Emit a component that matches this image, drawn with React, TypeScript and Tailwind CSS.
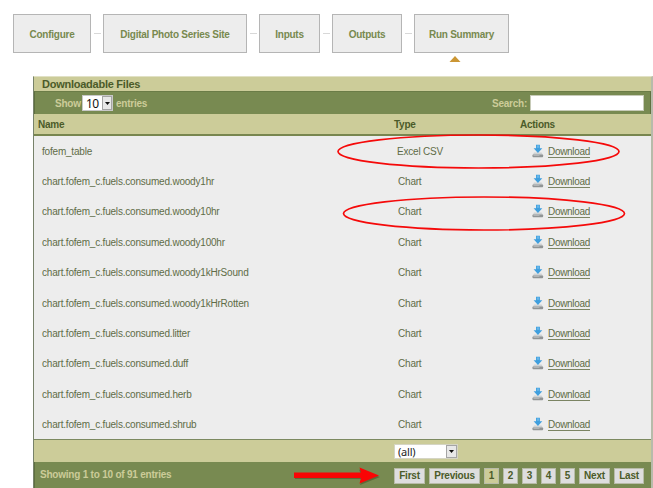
import React from "react";

const steps = [
  { label: "Configure", box: "w-[78px]", gap: "w-[12px]" },
  { label: "Digital Photo Series Site", box: "w-[144px]", gap: "w-[12px]" },
  { label: "Inputs", box: "w-[61px]", gap: "w-[12px]" },
  { label: "Outputs", box: "w-[70px]", gap: "w-[12px]" },
  { label: "Run Summary", box: "w-[95px]", gap: "" },
];

const files = [
  ["fofem_table", "Excel CSV"],
  ["chart.fofem_c.fuels.consumed.woody1hr", "Chart"],
  ["chart.fofem_c.fuels.consumed.woody10hr", "Chart"],
  ["chart.fofem_c.fuels.consumed.woody100hr", "Chart"],
  ["chart.fofem_c.fuels.consumed.woody1kHrSound", "Chart"],
  ["chart.fofem_c.fuels.consumed.woody1kHrRotten", "Chart"],
  ["chart.fofem_c.fuels.consumed.litter", "Chart"],
  ["chart.fofem_c.fuels.consumed.duff", "Chart"],
  ["chart.fofem_c.fuels.consumed.herb", "Chart"],
  ["chart.fofem_c.fuels.consumed.shrub", "Chart"],
];

const pages = [
  { label: "First", box: "w-[31px] mr-[4px]" },
  { label: "Previous", box: "w-[51px] mr-[4px]" },
  { label: "1", box: "w-[15px] mr-[4px]" },
  { label: "2", box: "w-[15px] mr-[4px]" },
  { label: "3", box: "w-[15px] mr-[4px]" },
  { label: "4", box: "w-[15px] mr-[4px]" },
  { label: "5", box: "w-[15px] mr-[4px]" },
  { label: "Next", box: "w-[31px] mr-[4px]" },
  { label: "Last", box: "w-[30px]" },
];

function DownloadIcon() {
  return (
    <svg width="12" height="14" viewBox="0 0 12 14" className="mr-[4px] -mt-px shrink-0">
      <path d="M2 8.500h7.600L11 11H0.600z" fill="#d0d3d4" />
      <rect x="0.500" y="10.500" width="10.600" height="2.800" rx="0.800" fill="#909495" />
      <path d="M1.500 11.300h6" stroke="#c5c8c9" strokeWidth="0.800" />
      <path d="M4 0.700h3.900v3.500h2.400L5.950 9 1.600 4.200H4z" fill="#3f9fde" />
      <path d="M4.800 1.300h2.200v2.500H4.800z" fill="#69b8ea" />
    </svg>
  );
}

function SelectArrow({ className }: { className: string }) {
  return (
    <span className={"flex items-center justify-center border border-[#a5a5a5] bg-[#e8e8e8] " + className}>
      <svg width="5" height="3" viewBox="0 0 5 3">
        <path d="M0 0h5L2.5 3z" fill="#111" />
      </svg>
    </span>
  );
}

export default function App() {
  return (
    <div className="relative h-[488px] w-[653px] overflow-hidden bg-white font-['Liberation_Sans',Arial,sans-serif] text-[11px] leading-[13px] whitespace-nowrap">
      <nav className="flex h-[76px] items-start pt-[14px] pl-[13px]">
        {steps.map((s) => (
          <React.Fragment key={s.label}>
            <div className={"relative flex h-[39px] items-center justify-center border border-[#b5b5b5] bg-[#ededed] pt-px text-[10px] font-bold tracking-[-0.250px] text-[#78894f] " + s.box}>
              {s.label}
              {s.label === "Run Summary" && (
                <svg width="12" height="6" viewBox="0 0 12 6" className="absolute top-[41px] left-[34px]">
                  <path d="M0.5 6 6 0l5.500 6z" fill="#cb9634" />
                </svg>
              )}
            </div>
            {s.gap && (
              <div className={"flex h-[39px] items-center justify-center " + s.gap}>
                <span className="h-px w-[7px] bg-[#d8d8d8]" />
              </div>
            )}
          </React.Fragment>
        ))}
      </nav>

      <section className="ml-[33px] flex h-[412px] w-[620px] flex-col border-t border-r-2 border-l border-t-[#e1e1c5] border-r-[#b7bbaa] border-l-[#77826a] bg-[#ededed]">
        <h2 className="h-[14px] bg-[#cccc99] pl-[8px] text-[11px] leading-[14px] font-bold tracking-[-0.250px] text-[#4b5b29]">
          Downloadable Files
        </h2>
        <div className="flex h-[23px] items-center border-t border-r border-l border-t-[#6b7c47] border-r-[#5f7040] border-l-[#5f7040] bg-[#788a51] pl-[20px] text-[10px] font-bold tracking-[-0.250px] text-[#cccc99]">
          <span className="w-[24px]">Show</span>
          <span className="ml-[3px] flex h-[16px] w-[31px] items-center border border-[#c8c8c8] bg-white">
            <span className="w-[19px] pl-[3px] font-['Noto_Sans',sans-serif] text-[12px] tracking-[-0.500px] font-normal text-[#111]">10</span>
            <SelectArrow className="h-[14px] w-[10px]" />
          </span>
          <span className="ml-[3px]">entries</span>
          <span className="ml-auto">Search:</span>
          <input className="mr-[6px] ml-[3px] h-[16px] w-[114px] border border-[#c7cbb8] bg-white" />
        </div>
        <div className="flex h-[22px] items-center border-b-2 border-[#78864f] bg-[#cccc99] pl-[4px] text-[10px] font-bold tracking-[-0.250px] text-[#4b5b29]">
          <span className="w-[356px]">Name</span>
          <span className="w-[126px]">Type</span>
          <span>Actions</span>
        </div>
        <div className="h-[303px]">
          {files.map(([name, type], i) => (
            <div key={name} className="flex h-[30.400px] items-center pl-[8px] text-[10px] tracking-[-0.200px] text-[#5f6c47]">
              <span className={i === 0 ? "w-[355px]" : "w-[356px]"}>{name}</span>
              <span className={i === 0 ? "w-[135px]" : "w-[134px]"}>{type}</span>
              <DownloadIcon />
              <a className="mt-px border-b border-[#7b8463] leading-[11px] tracking-[-0.300px]">Download</a>
            </div>
          ))}
        </div>
        <div className="flex h-[23px] items-center border-t border-[#7c8960] bg-[#cccc99]">
          <span className="ml-[360px] flex h-[15px] w-[64px] items-center justify-between border border-[#d5d5c4] bg-white">
            <span className="pl-[3px] font-['Noto_Sans',sans-serif] text-[11px] tracking-[-0.200px] text-[#222]">(all)</span>
            <SelectArrow className="h-[13px] w-[11px]" />
          </span>
        </div>
        <footer className="flex h-[26px] items-center border-l border-[#5f7040] bg-[#788a51] pt-px pl-[5px] text-[10px] font-bold tracking-[-0.220px] text-[#cccc99]">
          <span className="-mt-[2px] w-[354px]">Showing 1 to 10 of 91 entries</span>
          {pages.map((p) => (
            <span
              key={p.label}
              className={
                "flex h-[16px] shrink-0 items-center justify-center border border-[#b8bca8] text-[#4b5b29] " +
                (p.label === "1" ? "bg-[#cccc99] " : "bg-[#dedede] ") +
                p.box
              }
            >
              {p.label}
            </span>
          ))}
        </footer>
      </section>

      <svg width="653" height="488" viewBox="0 0 653 488" className="pointer-events-none absolute top-0 left-0">
        <g fill="none" stroke="#f50a0a" strokeWidth="1.700">
          <ellipse cx="478.500" cy="151.500" rx="140.500" ry="16.500" />
          <ellipse cx="484" cy="213.500" rx="140.500" ry="16.500" />
        </g>
        <path d="M295 474.500h66l-2-5 21 7.500-20 8 2-6H295z" fill="#4d552c" opacity="0.6" />
        <path d="M294 472.500h67l-1.500-5L379 475.500l-19.500 8 1.500-5.500h-67z" fill="#fa0505" />
      </svg>
    </div>
  );
}
